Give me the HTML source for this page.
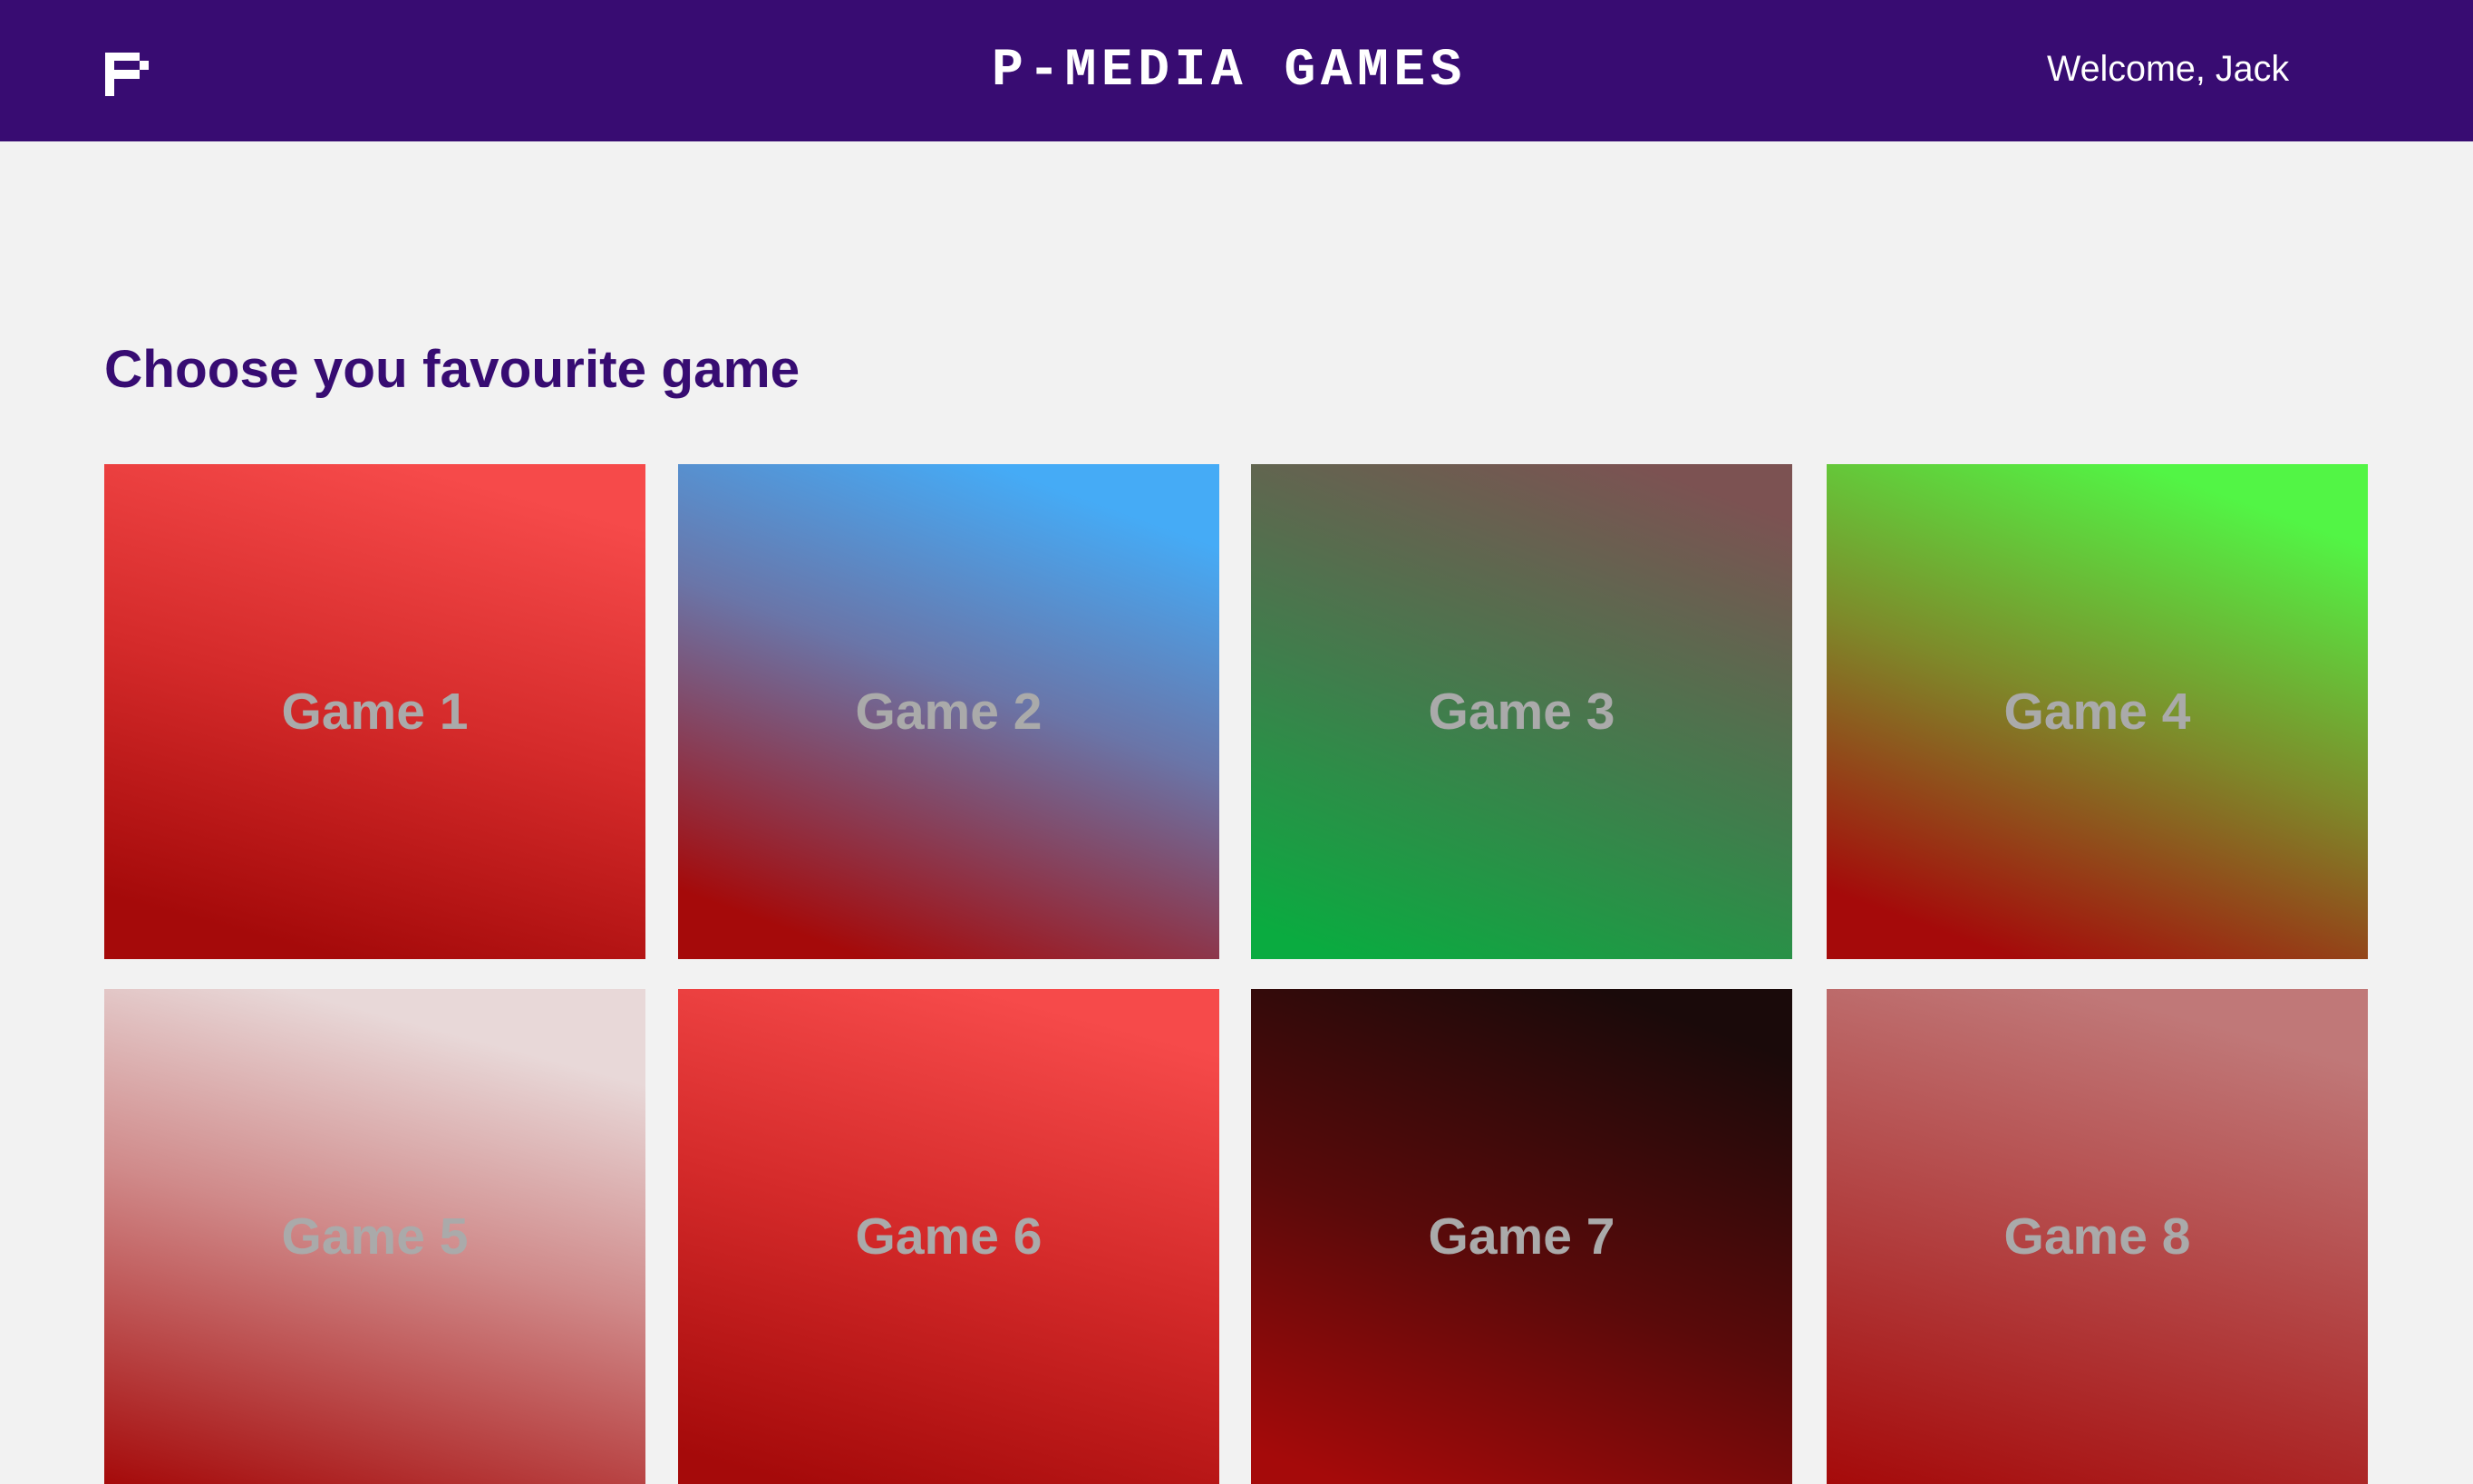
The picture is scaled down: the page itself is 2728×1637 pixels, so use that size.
<!DOCTYPE html>
<html><head><meta charset="utf-8"><style>
html,body{margin:0;padding:0;width:2728px;height:1534px;overflow:hidden;background:#f2f2f2;font-family:"Liberation Sans",sans-serif}
.hdr{position:absolute;left:0;top:0;width:2728px;height:156px;background:#380c72}
.title{position:absolute;left:1094px;top:44px;font-family:"Liberation Mono",monospace;font-weight:bold;font-size:58px;letter-spacing:5.5px;color:#fff;line-height:70px}
.wel{position:absolute;left:2258px;top:52px;font-size:39.5px;color:#fff;line-height:48px}
h1{position:absolute;left:115px;top:368px;margin:0;font-size:58.5px;font-weight:bold;color:#370c72;line-height:80px}
.c{position:absolute;width:597px;height:546px;display:flex;align-items:center;justify-content:center;color:#aaa;font-weight:bold;font-size:57px}
</style></head><body>
<div class="hdr">
<svg style="position:absolute;left:116px;top:58px" width="48" height="48" viewBox="0 0 48 48"><path fill="#fff" d="M0 0H38V9H10V19H38V29H10V48H0Z M38 9H48V19H38Z"/></svg>
<div class="title">P-MEDIA GAMES</div>
<div class="wel">Welcome, Jack</div>
</div>
<h1>Choose you favourite game</h1>
<div class="c" style="left:115px;top:512px;background:linear-gradient(195deg,#f64a4a 10%,#d42a2a 50%,#a50a0a 90%)">Game 1</div>
<div class="c" style="left:748px;top:512px;background:linear-gradient(200deg,#45abf6 12%,#6a75a8 45%,#a50a0a 90%)">Game 2</div>
<div class="c" style="left:1380px;top:512px;background:linear-gradient(200deg,#7c5252 8%,#3f7e4c 55%,#0aab40 95%)">Game 3</div>
<div class="c" style="left:2015px;top:512px;background:linear-gradient(200deg,#52f545 12%,#7e8a2a 50%,#a50a0a 90%)">Game 4</div>
<div class="c" style="left:115px;top:1091px;background:linear-gradient(195deg,#e8d8d8 15%,#d08a8a 50%,#a50a0a 100%)">Game 5</div>
<div class="c" style="left:748px;top:1091px;background:linear-gradient(195deg,#f64a4a 10%,#d42a2a 50%,#a50a0a 95%)">Game 6</div>
<div class="c" style="left:1380px;top:1091px;background:linear-gradient(200deg,#1a0a0a 10%,#5a0a0a 55%,#a50a0a 95%)">Game 7</div>
<div class="c" style="left:2015px;top:1091px;background:linear-gradient(195deg,#c07878 12%,#b44848 50%,#a50a0a 100%)">Game 8</div>
</body></html>
